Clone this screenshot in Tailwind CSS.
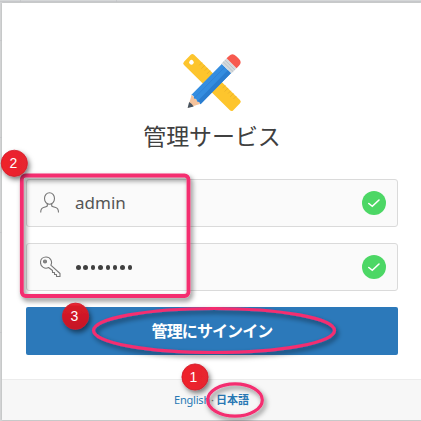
<!DOCTYPE html>
<html lang="ja">
<head>
<meta charset="utf-8">
<title>管理サービス</title>
<script src="https://cdn.jsdelivr.net/npm/@tailwindcss/browser@4"></script>
</head>
<body class="relative w-[421px] h-[421px] overflow-hidden bg-[#d5d7d8] pt-[3px] pl-[2px] font-['Noto_Sans','Noto_Sans_CJK_JP',sans-serif]">
<main class="flex h-[417px] w-[419px] flex-col bg-white shadow-[0_0_2px_#aaa]">
  <header class="flex flex-col items-center pl-[1px] pt-[48px]">
    <svg class="h-[62px] w-[62px]" viewBox="181 51 62 62">
      <g transform="translate(212 82.500) rotate(44.5) scale(.96)">
        <rect x="-36" y="-7.500" width="72" height="15" rx="2.500" fill="#fdc52d"/>
        <circle cx="-30" cy="0" r="2.400" fill="#fff"/>
        <path d="M-22-7.500v4M-18-7.500v5M-14-7.500v4M-10-7.500v5M12-7.500v4M16-7.500v5M20-7.500v4M24-7.500v5M28-7.500v4" stroke="#e9b02a" stroke-width=".8" fill="none"/>
      </g>
      <g transform="translate(212.700 82.500) rotate(-45.500) scale(.98 1)">
        <path d="M-36 0L-24-6.500V6.500Z" fill="#f5c39c"/>
        <path d="M-36.500 0L-31-3.200Q-30 0-31 3.200Z" fill="#46535f"/>
        <path d="M-24.500-6.500H20V6.500H-24.500Q-22.500 4-25 2.200Q-23-0-25-2.200Q-22.500-4-24.500-6.500Z" fill="#348de0"/>
        <path d="M-24.500 2.200H20V6.500H-24.500Q-23 4-24.500 2.200Z" fill="#2a7dd0"/>
        <path d="M-24.500-2.200H20" stroke="#2a7bd0" stroke-width=".5"/>
        <rect x="20" y="-7" width="7.500" height="14" fill="#d5dadd"/>
        <path d="M22.500-7V7M25-7V7" stroke="#b4bcc3" stroke-width=".8"/>
        <path d="M27.500-7H31Q36-7 36-2V2Q36 7 31 7H27.500Z" fill="#f75a4f"/>
      </g>
    </svg>
    <h1 class="mt-[6px] h-[34px] whitespace-nowrap text-[23px] leading-[32px] tracking-[-0.100px] text-[#404040] font-['Noto_Sans_CJK_JP',sans-serif]">管理サービス</h1>
  </header>

  <form class="mt-[26px] ml-[24px] flex w-[372px] flex-col gap-[16px]">
    <div class="flex h-[48px] items-center rounded-[3px] border border-[#dadada] bg-[#fafafa] pr-[11px] pl-[13px]">
      <svg class="h-[22px] w-[22px]" viewBox="0 0 22 22" fill="none" stroke="#777" stroke-width="1.100">
        <ellipse cx="9.500" cy="6.500" rx="5" ry="5.700"/>
        <path d="M7.300 11.500V14Q6.500 14.700 3.500 15.500Q.700 16.200.700 20.500M11.700 11.500V14Q12.500 14.700 15.700 15.500Q18.500 16.200 18.500 20.500"/>
      </svg>
      <span class="ml-[13px] flex-1 text-[17px] leading-[24px] text-[#555]">admin</span>
      <svg class="h-[24px] w-[24px]" viewBox="0 0 24 24"><circle cx="12" cy="12" r="12" fill="#4cd765"/><path d="M6.800 12.500L10.300 15.300L17 9" fill="none" stroke="#fff" stroke-width="1.600" stroke-linecap="round"/></svg>
    </div>
    <div class="flex h-[48px] items-center rounded-[3px] border border-[#dadada] bg-[#fafafa] pr-[11px] pl-[13px]">
      <svg class="h-[22px] w-[22px]" viewBox="0 0 22 22" fill="none" stroke="#777" stroke-width="1.100" stroke-linejoin="round">
        <path d="M10.800 9.200L20 17.500V20.500H16.500V18.500H14.500V16.500H12.500V14.500L8.500 11.500C5 13.500.500 10.800.500 6.500C.500 3 3 1 6 1C10.500 1 12.800 5.500 10.800 9.200Z"/>
        <circle cx="5" cy="5.500" r="1.500" fill="#888"/>
      </svg>
      <span class="ml-[14px] flex flex-1 gap-[2.900px] pt-px">
        <i class="size-[4.500px] rounded-full bg-[#404040]"></i><i class="size-[4.500px] rounded-full bg-[#404040]"></i><i class="size-[4.500px] rounded-full bg-[#404040]"></i><i class="size-[4.500px] rounded-full bg-[#404040]"></i><i class="size-[4.500px] rounded-full bg-[#404040]"></i><i class="size-[4.500px] rounded-full bg-[#404040]"></i><i class="size-[4.500px] rounded-full bg-[#404040]"></i><i class="size-[4.500px] rounded-full bg-[#404040]"></i>
      </span>
      <svg class="h-[24px] w-[24px]" viewBox="0 0 24 24"><circle cx="12" cy="12" r="12" fill="#4cd765"/><path d="M6.800 12.500L10.300 15.300L17 9" fill="none" stroke="#fff" stroke-width="1.600" stroke-linecap="round"/></svg>
    </div>
    <button type="button" class="h-[48px] whitespace-nowrap rounded-[2px] bg-[#2c79ba] pb-[2px] text-[16px] leading-[24px] font-bold tracking-[-0.900px] text-white font-['Noto_Sans_CJK_JP',sans-serif]">管理にサインイン</button>
  </form>

  <footer class="mt-auto flex h-[41px] items-center border-t border-[#ececec] bg-[#f7f7f7] pl-[172px] text-[11px] leading-[16px] text-[#2878b4]">
    <a class="w-[35px] tracking-[-0.200px]">English</a><span class="w-[7px] text-center text-[#777]">·</span><a class="whitespace-nowrap font-bold">日本語</a>
  </footer>
</main>

<svg class="absolute inset-0 h-[421px] w-[421px]" viewBox="0 0 421 421">
  <defs>
    <filter id="shadow" x="-20%" y="-20%" width="145%" height="150%"><feDropShadow dx="2" dy="3" stdDeviation="2.600" flood-color="#000" flood-opacity=".5"/></filter>
    <linearGradient id="badge" x1="0" y1="0" x2="0" y2="1"><stop stop-color="#f53038"/><stop offset=".12" stop-color="#d81c28"/><stop offset="1" stop-color="#c51326"/></linearGradient>
    <linearGradient id="badge2"><stop stop-color="#ef202b"/><stop offset="1" stop-color="#e62630"/></linearGradient>
  </defs>
  <path d="M0 1.500H421M20.500 0V2M116.500 0V2M0 40.500H2M0 137.500H2M0 232.500H2M0 332.500H2" stroke="#bfc2c4" stroke-opacity=".6" fill="none"/>
  <g filter="url(#shadow)" fill="none" stroke="#f42d70">
    <rect x="21.800" y="175.500" width="166.700" height="120.500" rx="4" stroke-width="3.800"/>
    <ellipse cx="214" cy="330.500" rx="120.500" ry="22" stroke-width="3.200"/>
    <ellipse cx="235" cy="400" rx="27.300" ry="16.200" stroke-width="3.200"/>
  </g>
  <g filter="url(#shadow)" stroke="#cf1c2b" stroke-width=".8">
    <circle cx="14.300" cy="163.300" r="13.100" fill="url(#badge2)"/>
    <circle cx="75.500" cy="316.200" r="13.100" fill="url(#badge)"/>
    <circle cx="195" cy="377" r="13.100" fill="url(#badge2)"/>
  </g>
  <g fill="#fff" font-family="'Liberation Sans', sans-serif" font-size="14" text-anchor="middle">
    <text x="13.500" y="167.500">2</text><text x="74.500" y="320.500">3</text><text x="193.500" y="381.500">1</text>
  </g>
</svg>
</body>
</html>
